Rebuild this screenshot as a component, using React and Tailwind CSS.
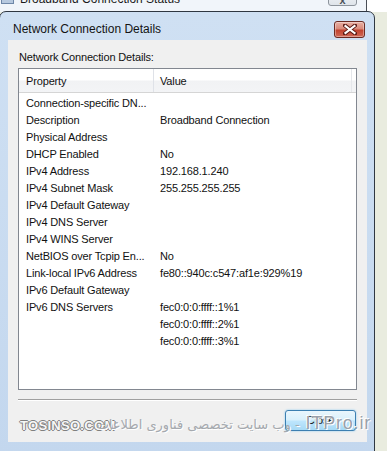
import React from "react";

const rows = [
  ["Connection-specific DN...", ""],
  ["Description", "Broadband Connection"],
  ["Physical Address", ""],
  ["DHCP Enabled", "No"],
  ["IPv4 Address", "192.168.1.240"],
  ["IPv4 Subnet Mask", "255.255.255.255"],
  ["IPv4 Default Gateway", ""],
  ["IPv4 DNS Server", ""],
  ["IPv4 WINS Server", ""],
  ["NetBIOS over Tcpip En...", "No"],
  ["Link-local IPv6 Address", "fe80::940c:c547:af1e:929%19"],
  ["IPv6 Default Gateway", ""],
  ["IPv6 DNS Servers", "fec0:0:0:ffff::1%1"],
  ["", "fec0:0:0:ffff::2%1"],
  ["", "fec0:0:0:ffff::3%1"],
];

function RedClose() {
  return (
    <div className="relative w-[31px] h-[17px] rounded-[3px] border border-[#6b2a22] bg-[linear-gradient(to_bottom,#e8b0a4_0%,#d98a7a_45%,#c2432f_55%,#cf6a58_100%)] flex items-center justify-center shadow-[inset_0_0_0_1px_rgba(255,255,255,0.35)]">
      <svg width="14" height="11" viewBox="0 0 14 11">
        <path d="M2 1.5 L12 9.5 M12 1.5 L2 9.5" stroke="#5a1a14" strokeWidth="4" strokeLinecap="square" />
        <path d="M2.5 2 L11.5 9 M11.5 2 L2.5 9" stroke="#ffffff" strokeWidth="2.2" strokeLinecap="square" />
      </svg>
    </div>
  );
}

export default function App() {
  const font = "font-['Liberation_Sans',Arial,sans-serif]";
  return (
    <div className={`relative w-[387px] h-[451px] overflow-hidden bg-[#e9ecdf] ${font} text-[#111]`}>
      {/* background window (Broadband Connection Status) */}
      <div className="absolute left-0 top-0 w-[387px] h-[12px] flex">
        <div className="relative w-[367px] h-full bg-[#f1f5fa] border-r border-[#4a4f57]">
          <div className="absolute left-[1px] top-[-5px] w-[13px] h-[9px] border border-[#6e87a8] bg-[#b7c9df]" />
          <div className="absolute left-[20px] top-[-8px] text-[12px] leading-[14px] text-[#1b1b1b] whitespace-nowrap">
            Broadband Connection Status
          </div>
          <div className="absolute left-[328px] top-[-10px] w-[29px] h-[16px] rounded-[3px] border border-[#8d949c] bg-[linear-gradient(to_bottom,#f4f6f9,#dfe4ea)] flex items-end justify-center">
            <span className="text-[11px] leading-[12px] font-bold text-[#4a4f57] mb-[-1px]">x</span>
          </div>
        </div>
        <div className="flex-1 bg-white" />
      </div>

      {/* dialog */}
      <div className="absolute left-[-1px] top-[11px] w-[376px] h-[446px] rounded-t-[7px] border border-[#2f3742] bg-[linear-gradient(to_bottom,#cfe0f3,#c3d7ee)] flex flex-col">
        {/* title bar */}
        <div className="h-[28px] pt-[6px] pl-[13px] pr-[9px] flex items-center justify-between shrink-0">
          <span className="text-[12px] leading-[14px] text-[#141414] whitespace-nowrap">Network Connection Details</span>
          <RedClose />
        </div>

        {/* client area */}
        <div className="ml-[8px] mr-[7px] h-[402px] shrink-0 bg-[#f0f0f0] flex flex-col text-[11px] tracking-[-0.15px]">
          <div className="pt-[11px] pl-[11px] leading-[13px] whitespace-nowrap">Network Connection Details:</div>

          {/* list view */}
          <div className="mt-[4px] mx-[10px] h-[322px] border border-[#828790] bg-white flex flex-col">
            <div className="h-[24px] flex border-b border-[#d5d5d5] bg-[linear-gradient(to_bottom,#ffffff_0%,#ffffff_48%,#f1f2f4_52%,#f3f4f6_100%)]">
              <div className="w-[135px] pl-[7px] pt-[1px] flex items-center border-r border-[#dfe2e8] whitespace-nowrap">Property</div>
              <div className="w-[198px] pl-[6px] pt-[1px] flex items-center border-r border-[#e5e7eb] whitespace-nowrap">Value</div>
              <div className="flex-1" />
            </div>
            <div className="pt-[2px] flex flex-col">
              {rows.map(([p, v], i) => (
                <div key={i} className="h-[17px] flex items-center whitespace-nowrap leading-[13px]">
                  <div className="w-[135px] pl-[7px]">{p}</div>
                  <div className="pl-[6px]">{v}</div>
                </div>
              ))}
            </div>
          </div>

          {/* separator */}
          <div className="mt-[9px] mx-[10px] h-[2px] border-t border-[#a0a0a0] border-b border-b-white" />

          {/* close button */}
          <div className="mt-[9px] self-end mr-[11px] w-[71px] h-[21px] rounded-[3px] border border-[#3c7fb1] bg-[linear-gradient(to_bottom,#eaf6fd_0%,#d9f0fc_48%,#bee6fd_52%,#a7d9f5_100%)] shadow-[0_0_2px_#7ec4f0] flex items-center justify-center">
            <span className="text-[11px] leading-[13px] text-[#111]">Close</span>
          </div>
        </div>
      </div>

      {/* watermark */}
      <div className="absolute left-[20px] top-[418px] text-[13px] leading-[15px] font-bold tracking-[0.3px] text-[#f7f7f7] [text-shadow:1px_0_0_#7f7f7f,-1px_0_0_#7f7f7f,0_1px_0_#7f7f7f,0_-1px_0_#7f7f7f] whitespace-nowrap">
        TOSINSO.COM
      </div>
      <div dir="rtl" className="absolute right-[16px] top-[413px] flex items-baseline gap-[6px] whitespace-nowrap">
        <span className="text-[18px] leading-[20px] tracking-[0.8px] text-[#9aa1aa] [text-shadow:1px_1px_0_#ffffff,-1px_-1px_0_#ffffff]" dir="ltr">ITPro.ir</span>
        <span className="font-['DejaVu_Sans',sans-serif] text-[13px] leading-[16px] text-[#a5a9ae] [text-shadow:1px_1px_0_#ffffff]">- وب سایت تخصصی فناوری اطلاعات</span>
      </div>
    </div>
  );
}
